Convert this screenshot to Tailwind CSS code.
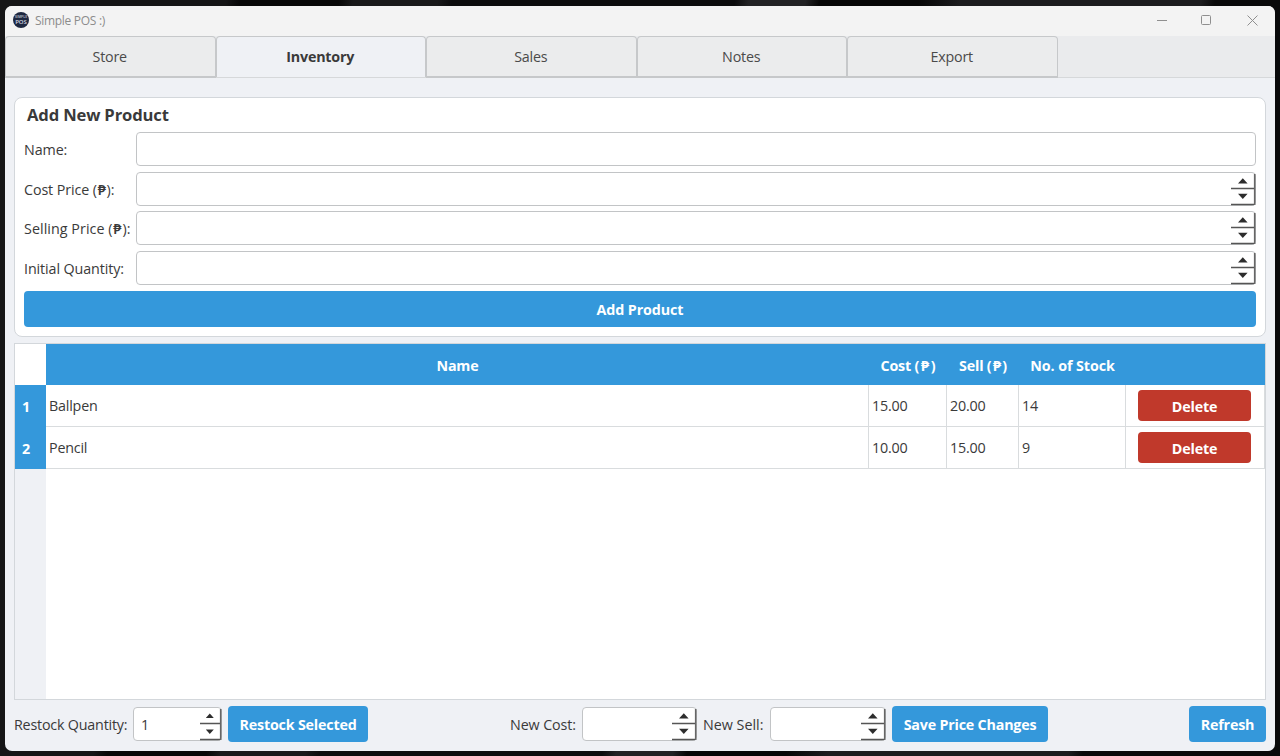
<!DOCTYPE html>
<html lang="en">
<head>
  <meta charset="UTF-8" />
  <meta name="viewport" content="width=device-width, initial-scale=1.0"/>
  <title>Simple POS :)</title>
  <script src="https://cdn.jsdelivr.net/npm/@tailwindcss/browser@4"></script>
</head>
<body class="h-screen overflow-hidden bg-[linear-gradient(100deg,#151516_0_16%,#070707_17%_24%,#19191a_25%_31%,#0c0c0d_32%_52%,#222224_53%_57%,#060606_58%_65%,#1c1c1e_68%_85%,#09090a_86%)] pt-[6px] pr-[5px] pb-[5px] pl-[5px] font-['Open_Sans','Noto_Sans',sans-serif] text-[14.3px] tracking-[-0.2px] text-[#3a3a3a] whitespace-nowrap">
  <!-- icons shared by the spin boxes -->
  <svg class="hidden">
    <symbol id="spin" viewBox="0 0 26 34">
      <path d="M1 16.5h23M1 32.5h23" stroke="#555" stroke-width="1.4"/>
      <path d="M24.7 2v31" stroke="#666" stroke-width="1.6"/>
      <path d="M8 11.5l4.8-5.2 4.8 5.2zM8 21.7l4.8 5.2 4.8-5.2z" fill="#2d2d2d"/>
    </symbol>
    <symbol id="spin-small" viewBox="0 0 26 34">
      <path d="M4 16.5h20M4 32.5h20" stroke="#555" stroke-width="1.4"/>
      <path d="M24.7 2v31" stroke="#666" stroke-width="1.6"/>
      <path d="M9.8 11l4-4.4 4 4.4zM9.8 22.5l4 4.4 4-4.4z" fill="#2d2d2d"/>
    </symbol>
  </svg>

  <div class="flex h-full flex-col overflow-hidden rounded-[7px] bg-[#eff1f5]">
    <!-- Title bar -->
    <header class="flex h-[30px] shrink-0 items-center bg-[#f3f3f3] pl-2 text-[12px] text-[#8c8c8c]">
      <svg class="-mt-[2px] size-4" viewBox="0 0 16 16">
        <circle cx="8" cy="8" r="8" fill="#1d2740"/>
        <text x="8" y="6.2" font-size="3.4" font-weight="700" fill="#aab" text-anchor="middle" letter-spacing="0">SIMPLE</text>
        <text x="8" y="11.7" font-size="6" font-weight="600" fill="#d5d8e0" text-anchor="middle" letter-spacing="0">POS</text>
      </svg>
      <span class="ml-[6px] tracking-[-0.3px]">Simple POS :)</span>
      <svg class="ml-auto mr-[16px] h-3 w-[104px] -mt-[2px]" viewBox="0 0 104 12" fill="none" stroke="#8f8f8f">
        <path d="M2 6.5h10"/>
        <rect x="46.5" y="1.5" width="9" height="9" rx="1"/>
        <path d="M92.5 1.5l10 10M102.5 1.5l-10 10"/>
      </svg>
    </header>

    <!-- Tabs -->
    <nav class="flex h-[42px] shrink-0 border-b border-[#d6d8da] bg-[#eaebed] text-center leading-[40px]">
      <div class="-mb-px w-[210.5px] rounded-t border border-b-2 border-[#c6c8ca] bg-[#ebeced] pr-px text-[#4a4a4a]">Store</div>
      <div class="w-[210.5px] rounded-t border border-b-0 border-[#c6c8ca] bg-[#eff1f5] pr-px font-bold">Inventory</div>
      <div class="-mb-px w-[210.5px] rounded-t border border-b-2 border-[#c6c8ca] bg-[#ebeced] pr-px text-[#4a4a4a]">Sales</div>
      <div class="-mb-px w-[210.5px] rounded-t border border-b-2 border-[#c6c8ca] bg-[#ebeced] pr-px text-[#4a4a4a]">Notes</div>
      <div class="-mb-px w-[210.5px] rounded-t border border-b-2 border-[#c6c8ca] bg-[#ebeced] pr-px text-[#4a4a4a]">Export</div>
    </nav>

    <main class="flex min-h-0 flex-1 flex-col px-[9px] pt-[19px]">
      <!-- Add product form -->
      <section class="h-[240px] w-[1252px] shrink-0 rounded-[8px] border border-[#d3d7db] bg-white px-[9px]">
        <h2 class="ml-[3px] h-[34px] pt-[5px] text-[16.6px] leading-6 font-bold tracking-[-0.15px]">Add New Product</h2>
        <div class="grid grid-cols-[112px_1120px] gap-y-[5.7px] leading-[35px] tracking-[-0.1px]">
          <label class="h-[34px]">Name:</label>
          <div class="h-[34px] rounded border border-[#c2c4c6]"></div>
          <label class="h-[34px]">Cost Price (<span class="inline-block px-[0.8px] font-semibold">₱</span>):</label>
          <div class="flex h-[34px] justify-end rounded border border-[#c2c4c6]"><svg class="-mt-px -mr-px h-[34px] w-[26px]"><use href="#spin"/></svg></div>
          <label class="h-[34px] tracking-[0.05px]">Selling Price (<span class="inline-block px-[0.8px] font-semibold">₱</span>):</label>
          <div class="flex h-[34px] justify-end rounded border border-[#c2c4c6]"><svg class="-mt-px -mr-px h-[34px] w-[26px]"><use href="#spin"/></svg></div>
          <label class="h-[34px]">Initial Quantity:</label>
          <div class="flex h-[34px] justify-end rounded border border-[#c2c4c6]"><svg class="-mt-px -mr-px h-[34px] w-[26px]"><use href="#spin"/></svg></div>
        </div>
        <button class="mt-[6px] h-9 w-[1232px] rounded bg-[#3498db] pt-[2px] font-bold tracking-[-0.1px] text-white">Add Product</button>
      </section>

      <!-- Product table -->
      <section class="mt-[6px] h-[357px] w-[1252px] shrink-0 border border-[#d3d7db] bg-[linear-gradient(to_right,#eff1f5_31px,#fff_31px)]">
        <div class="grid grid-cols-[31px_823px_78px_72px_107px_139px] grid-rows-[41px_42px_42px]">
          <div class="bg-white"></div>
          <div class="bg-[#3498db] text-center leading-[43px] font-bold text-white">Name</div>
          <div class="bg-[#3498db] text-center leading-[43px] font-bold text-white">Cost (<span class="inline-block px-[1.8px]">₱</span>)</div>
          <div class="bg-[#3498db] text-center leading-[43px] font-bold text-white">Sell (<span class="inline-block px-[1.4px]">₱</span>)</div>
          <div class="bg-[#3498db] text-center leading-[43px] font-bold tracking-[-0.1px] text-white">No. of Stock</div>
          <div class="bg-[#3498db]"></div>

          <div class="bg-[#3498db] pl-[7px] leading-[43px] font-bold text-white">1</div>
          <div class="border-r border-b border-[#d9dcde] pl-[3px] leading-[41px]">Ballpen</div>
          <div class="border-r border-b border-[#d9dcde] pl-[3px] leading-[41px]">15.00</div>
          <div class="border-r border-b border-[#d9dcde] pl-[3px] leading-[41px]">20.00</div>
          <div class="border-r border-b border-[#d9dcde] pl-[3px] leading-[41px]">14</div>
          <div class="border-r border-b border-[#d9dcde] pt-[5px] pl-3"><button class="block h-[31px] w-[113px] rounded bg-[#c0392b] pt-[2px] font-bold text-white">Delete</button></div>

          <div class="bg-[#3498db] pl-[7px] leading-[43px] font-bold text-white">2</div>
          <div class="border-r border-b border-[#d9dcde] pl-[3px] leading-[41px]">Pencil</div>
          <div class="border-r border-b border-[#d9dcde] pl-[3px] leading-[41px]">10.00</div>
          <div class="border-r border-b border-[#d9dcde] pl-[3px] leading-[41px]">15.00</div>
          <div class="border-r border-b border-[#d9dcde] pl-[3px] leading-[41px]">9</div>
          <div class="border-r border-b border-[#d9dcde] pt-[5px] pl-3"><button class="block h-[31px] w-[113px] rounded bg-[#c0392b] pt-[2px] font-bold text-white">Delete</button></div>
        </div>
      </section>

      <!-- Restock and price controls -->
      <footer class="mt-[6px] flex h-9 w-[1252px] items-center">
        <label class="w-[119px] pt-[2px]">Restock Quantity:</label>
        <div class="flex h-[34px] w-[89px] justify-between rounded border border-[#c2c4c6] bg-white pl-[7px] leading-[33px]">1<svg class="-mt-px -mr-px h-[34px] w-[26px]"><use href="#spin-small"/></svg></div>
        <button class="ml-[6px] h-9 w-[140px] rounded bg-[#3498db] pt-[2px] font-bold text-white">Restock Selected</button>
        <label class="ml-[142px] w-[72px] pt-[2px] tracking-[-0.1px]">New Cost:</label>
        <div class="flex h-[34px] w-[115px] justify-end rounded border border-[#c2c4c6] bg-white"><svg class="-mt-px -mr-px h-[34px] w-[26px]"><use href="#spin"/></svg></div>
        <label class="ml-[6px] w-[67px] pt-[2px] tracking-[0px]">New Sell:</label>
        <div class="flex h-[34px] w-[116px] justify-end rounded border border-[#c2c4c6] bg-white"><svg class="-mt-px -mr-px h-[34px] w-[26px]"><use href="#spin"/></svg></div>
        <button class="ml-[6px] h-9 w-[156px] rounded bg-[#3498db] pt-[2px] font-bold text-white">Save Price Changes</button>
        <button class="ml-auto h-9 w-[77px] rounded bg-[#3498db] pt-[2px] font-bold text-white">Refresh</button>
      </footer>
    </main>
  </div>
</body>
</html>
